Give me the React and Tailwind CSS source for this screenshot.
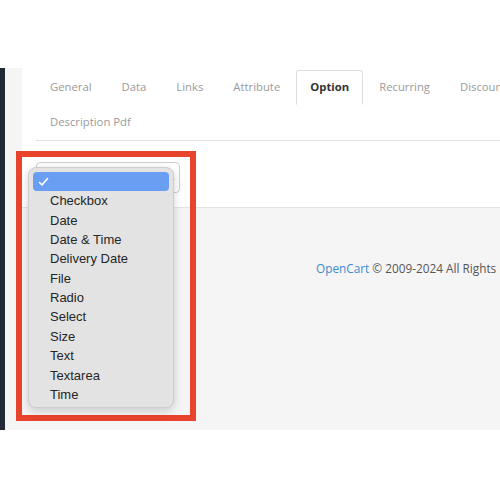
import React from "react";

const tabs = ["General", "Data", "Links", "Attribute", "Option", "Recurring", "Discount"];
const items = ["Checkbox", "Date", "Date & Time", "Delivery Date", "File", "Radio", "Select", "Size", "Text", "Textarea", "Time"];

export default function App() {
  return (
    <div className="relative w-[500px] h-[500px] overflow-hidden bg-white" style={{ fontFamily: '"Open Sans", sans-serif' }}>
      <div className="h-[68px]" />
      <div className="flex h-[362px]">
        <div className="w-[5px] shrink-0 bg-[#222a35]" />
        <div className="flex-1 bg-[#f5f5f5] pl-[17px] flex flex-col min-w-0 overflow-hidden">
          <div className="bg-white h-[140px] pl-[14px] pt-[2px] border-b border-[#e4e4e4] w-[620px]">
            <div className="border-b border-[#e2e2e2]">
              <div className="flex flex-wrap w-[540px]">
                {tabs.map((t) => (
                  <div
                    key={t}
                    className={
                      "h-[35px] px-[13px] mr-[2px] flex items-center text-[11.3px] whitespace-nowrap rounded-t-[3px] border " +
                      (t === "Option"
                        ? "border-[#dedede] border-b-white -mb-px font-bold text-[#333]"
                        : "border-transparent text-[#9a9a9a]")
                    }
                  >
                    {t}
                  </div>
                ))}
                <div className="h-[35px] px-[14px] flex items-center text-[11.3px] text-[#9a9a9a] whitespace-nowrap">
                  Description Pdf
                </div>
              </div>
            </div>
            <div className="mt-[21px] w-[144px] h-[31px] border border-[#cfcfcf] rounded-[4px] bg-white flex items-center justify-end pr-[4px]">
              <svg width="6" height="8" viewBox="0 0 6 8">
                <path d="M1 5.5 L3 7.5 L5 5.5" fill="none" stroke="#666" strokeWidth="1" />
              </svg>
            </div>
          </div>
          <div className="pt-[52px] pl-[294px] text-[11.8px] text-[#555] whitespace-nowrap">
            <span className="text-[#3d8bd0]">OpenCart</span> © 2009-2024 All Rights Reserved.
          </div>
        </div>
      </div>

      <div className="absolute left-[16px] top-[151px] w-[180px] h-[270px] border-[6px] border-[#e8432d]" />

      <div
        className="absolute left-[28px] top-[167px] w-[146px] h-[241px] rounded-[8px] bg-[#e3e3e3] border border-[#cdcdcd] shadow-[0_3px_10px_rgba(0,0,0,0.18)] px-[4px] pt-[4px]"
        style={{ fontFamily: '"Liberation Sans", Arial, sans-serif' }}
      >
        <div className="h-[19.4px] rounded-[4px] bg-[#6a9ef2] flex items-center pl-[5px]">
          <svg width="11" height="10" viewBox="0 0 11 10">
            <path d="M1.5 5.5 L4 8 L9.5 1.5" fill="none" stroke="white" strokeWidth="1.6" strokeLinecap="round" strokeLinejoin="round" />
          </svg>
        </div>
        {items.map((it) => (
          <div key={it} className="h-[19.36px] flex items-center pl-[17px] text-[13px] text-[#262626]">
            {it}
          </div>
        ))}
      </div>
    </div>
  );
}
